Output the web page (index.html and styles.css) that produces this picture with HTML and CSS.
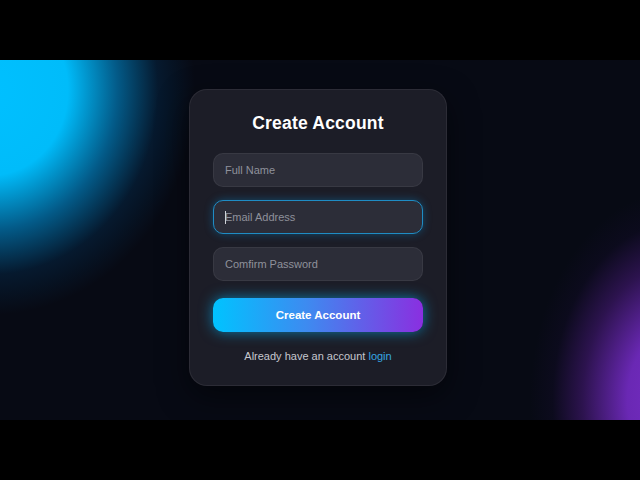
FILE: index.html
```html
<!DOCTYPE html>
<html lang="en">
<head>
<meta charset="utf-8">
<title>Create Account</title>
<link rel="stylesheet" href="styles.css">
</head>
<body>
<main class="stage">
  <form class="card">
    <h1 class="title">Create Account</h1>
    <input class="field" type="text" placeholder="Full Name">
    <div class="field-wrap focused">
      <input class="field" type="email" placeholder="Email Address">
    </div>
    <input class="field" type="password" placeholder="Comfirm Password">
    <button class="btn" type="button">Create Account</button>
    <p class="footer">Already have an account <a href="#" class="link">login</a></p>
  </form>
</main>
</body>
</html>
```
FILE: styles.css
```css
html, body {
  margin: 0;
  padding: 0;
  background: #000;
}
body {
  padding: 60px 0;
  font-family: "Liberation Sans", Arial, sans-serif;
}
.stage {
  height: 360px;
  display: flex;
  justify-content: center;
  align-items: flex-start;
  padding-top: 29px;
  box-sizing: border-box;
  background:
    radial-gradient(ellipse 205px 225px at -10px 30px, #00c0ff 0%, #00bcfa 38%, rgba(0,145,215,0.6) 62%, rgba(0,80,140,0.22) 82%, rgba(0,0,0,0) 100%),
    radial-gradient(ellipse 150px 210px at 680px 340px, #7a2fc8 0%, #6a28b4 35%, rgba(90,30,150,0.45) 65%, rgba(40,15,80,0.15) 85%, rgba(0,0,0,0) 100%),
    #070a14;
}
.card {
  width: 258px;
  box-sizing: border-box;
  margin-right: 4px;
  padding: 22px 23px 21px;
  background: #1c1d27;
  border: 1px solid rgba(255,255,255,0.07);
  border-radius: 18px;
  box-shadow: 0 10px 30px rgba(0,0,0,0.5);
  display: flex;
  flex-direction: column;
}
.title {
  margin: 0 0 19px;
  text-align: center;
  color: #fff;
  font-size: 17.5px;
  line-height: 22px;
  font-weight: 700;
  letter-spacing: 0.2px;
}
.field {
  display: block;
  width: 100%;
  height: 34px;
  box-sizing: border-box;
  margin: 0 0 13px;
  padding: 0 11px;
  background: #2c2d38;
  border: 1px solid rgba(255,255,255,0.06);
  border-radius: 10px;
  color: #fff;
  font-family: "Liberation Sans", Arial, sans-serif;
  font-size: 11px;
  outline: none;
}
.field::placeholder {
  color: #8f919b;
}
.field-wrap {
  position: relative;
}
.focused .field {
  border-color: #1f8cc4;
  box-shadow: 0 0 8px rgba(0,160,240,0.35);
}
.focused::before {
  content: "";
  position: absolute;
  left: 12px;
  top: 11px;
  width: 1px;
  height: 13px;
  background: #d0d2d8;
}
.btn {
  margin-top: 4px;
  height: 34px;
  border: none;
  border-radius: 10px;
  background: linear-gradient(90deg, #00c3ff 0%, #3e8af0 45%, #8a2fe0 100%);
  color: #fff;
  font-family: "Liberation Sans", Arial, sans-serif;
  font-size: 11.5px;
  font-weight: 700;
  box-shadow: 0 0 14px rgba(0,185,255,0.6);
}
.footer {
  margin: 16px 0 0;
  text-align: center;
  color: #c6c7ce;
  font-size: 11px;
  line-height: 16px;
}
.link {
  color: #36a6e2;
  text-decoration: none;
}
```
